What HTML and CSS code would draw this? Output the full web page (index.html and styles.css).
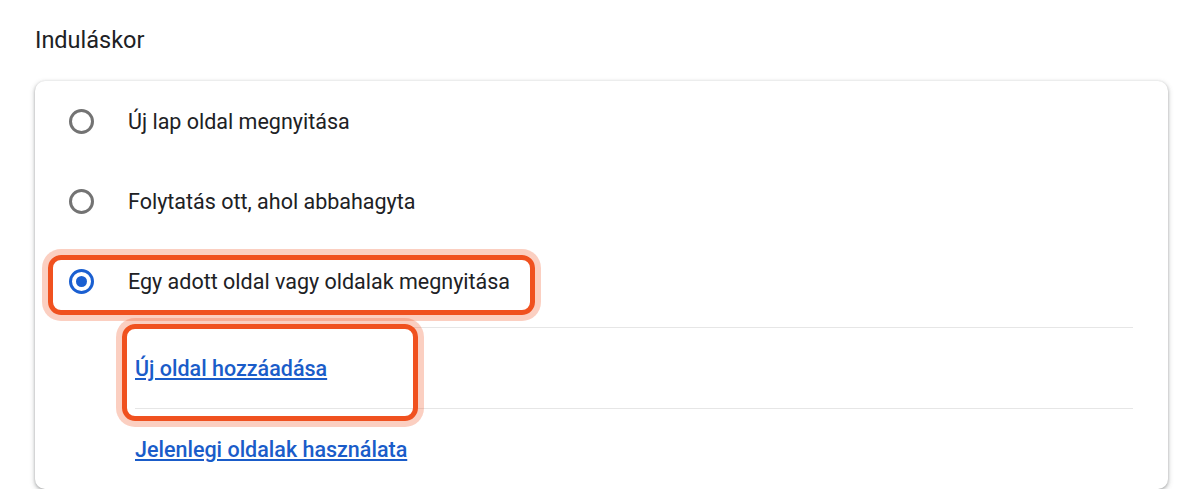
FILE: index.html
```html
<!DOCTYPE html>
<html lang="hu">
<head>
<meta charset="utf-8">
<title>Induláskor</title>
<link rel="stylesheet" href="styles.css">
</head>
<body>
<div class="page">
  <h2 class="section-title">Induláskor</h2>
  <div class="card">
    <div class="radio-row">
      <span class="radio"></span>
      <span class="label">Új lap oldal megnyitása</span>
    </div>
    <div class="radio-row">
      <span class="radio"></span>
      <span class="label">Folytatás ott, ahol abbahagyta</span>
    </div>
    <div class="radio-row">
      <span class="radio checked"></span>
      <span class="label">Egy adott oldal vagy oldalak megnyitása</span>
    </div>
    <div class="sub-list">
      <div class="link-row"><a class="link" href="#">Új oldal hozzáadása</a></div>
      <div class="link-row"><a class="link" href="#">Jelenlegi oldalak használata</a></div>
    </div>
    <div class="highlight highlight-option"></div>
    <div class="highlight highlight-add"></div>
  </div>
</div>
</body>
</html>
```

FILE: styles.css
```css
* { box-sizing: border-box; }

html, body {
  margin: 0;
  padding: 0;
  background: #ffffff;
}

body {
  font-family: Roboto, "Noto Sans", "Liberation Sans", sans-serif;
  color: #202124;
}

.page {
  padding: 26px 32px 0 35px;
}

.section-title {
  margin: 0;
  font-size: 23.5px;
  line-height: 28px;
  font-weight: 400;
  color: #202124;
}

.card {
  position: relative;
  margin-top: 27px;
  width: 1133px;
  height: 408px;
  background: #fff;
  border-radius: 10px;
  box-shadow: 0 1px 3px 0 rgba(60, 64, 67, 0.35), 0 2px 5px 1px rgba(60, 64, 67, 0.18);
}

.radio-row {
  display: flex;
  align-items: center;
  height: 80px;
  padding-left: 34px;
  gap: 34px;
}

.radio {
  flex: none;
  width: 25px;
  height: 25px;
  border-radius: 50%;
  border: 3px solid #737373;
  display: flex;
  align-items: center;
  justify-content: center;
}

.radio.checked {
  border-color: #1a5fd1;
}

.radio.checked::after {
  content: "";
  width: 11px;
  height: 11px;
  border-radius: 50%;
  background: #1a5fd1;
}

.label {
  font-size: 21.5px;
  color: #202124;
}

.sub-list {
  padding-top: 6px;
  margin-left: 100px;
  margin-right: 35px;
}

.link-row {
  height: 81px;
  border-top: 1px solid #e6e6e6;
  display: flex;
  align-items: center;
}

.link {
  font-size: 21.5px;
  font-weight: 500;
  color: #1a5cc9;
  text-decoration: underline;
  text-underline-offset: 2px;
}

.highlight {
  position: absolute;
  border: 5px solid #f0511f;
  border-radius: 13px;
  box-shadow: 0 0 0 6px rgba(240, 81, 31, 0.28);
  pointer-events: none;
}

.highlight-option {
  left: 13px;
  top: 174px;
  width: 487px;
  height: 60px;
}

.highlight-add {
  left: 87px;
  top: 243px;
  width: 296px;
  height: 97px;
}
```
